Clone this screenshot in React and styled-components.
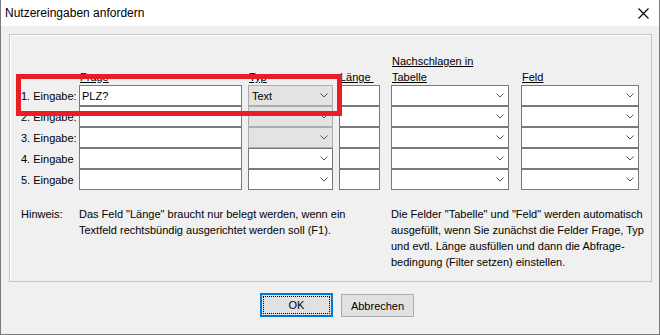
import React from "react";
import styled, { createGlobalStyle, css } from "styled-components";

const GlobalStyle = createGlobalStyle`
    html, body {
        margin: 0;
        padding: 0;
        background: #ffffff;
    }
    body {
        font-family: "Liberation Sans", Arial, sans-serif;
        color: #000;
    }
`
const columns = css`
    display: grid;
    grid-template-columns: 52px 163px 85px 46px 124px 118px;
    column-gap: 6px;
`
const Window = styled.div`
    position: relative;
    width: 660px;
    height: 335px;
    box-sizing: border-box;
    border: 1px solid #7a7a7a;
    border-top: none;
    background: #f0f0f0;
    display: flex;
    flex-direction: column;
`
const TitleBar = styled.div`
    height: 26px;
    background: #ffffff;
    display: flex;
    align-items: center;
    justify-content: space-between;
    padding: 0 10px 0 4px;
    font-size: 12px;
`
const Group = styled.div`
    margin: 8px 0 0 8px;
    width: 643px;
    height: 248px;
    box-sizing: border-box;
    border: 1px solid #c4c4c4;
    box-shadow: inset 1px 1px 0 #ffffff;
    padding: 18px 0 0 11px;
    display: flex;
    flex-direction: column;
    font-size: 11px;
`
const HeaderRow = styled.div`
    ${columns};
    height: 16px;
    line-height: 16px;
`
const Header = styled.div`
    grid-column: ${p => p.col};
    white-space: nowrap;
    > span {
        text-decoration: underline;
        padding-left: 1px;
    }
`
const DataRow = styled.div`
    ${columns};
    height: 21px;
`
const RowLabel = styled.div`
    display: flex;
    align-items: center;
    white-space: nowrap;
`
const TextBox = styled.div`
    width: ${p => p.w || "100%"};
    height: 21px;
    box-sizing: border-box;
    border: 1px solid #7a7a7a;
    background: #ffffff;
    display: flex;
    align-items: center;
    padding-left: 2px;
`
const Combo = styled.div`
    width: ${p => p.w || "100%"};
    height: 21px;
    box-sizing: border-box;
    border: 1px solid ${p => (p.locked ? "#adadad" : "#7a7a7a")};
    background: ${p => (p.locked ? "#e3e3e3" : "#ffffff")};
    display: flex;
    align-items: center;
    justify-content: space-between;
    padding: 0 4px 0 3px;
`
const HintRow = styled.div`
    ${columns};
    margin-top: 16px;
    line-height: 16px;
`
const HintText = styled.div`
    grid-column: ${p => p.span};
    white-space: nowrap;
`
const Footer = styled.div`
    display: flex;
    gap: 8px;
    padding: 11px 0 0 259px;
`
const Button = styled.button`
    width: 73px;
    height: ${p => (p.primary ? "24px" : "23px")};
    margin-top: ${p => (p.primary ? "0" : "1px")};
    box-sizing: border-box;
    font-family: "Liberation Sans", Arial, sans-serif;
    font-size: 11px;
    color: #000;
    background: #e1e1e1;
    border: ${p => (p.primary ? "2px solid #0078d7" : "1px solid #adadad")};
    outline: ${p => (p.primary ? "1px dotted #000" : "none")};
    outline-offset: -4px;
    padding: 0;
`
const Highlight = styled.div`
    position: absolute;
    left: 15px;
    top: 74px;
    width: 326px;
    height: 42px;
    box-sizing: border-box;
    border: 5px solid #ec1c24;
    pointer-events: none;
`

const Chevron = () => (
    <svg width="8" height="5" viewBox="0 0 8 5">
        <polyline points="0.5,0.5 4,4 7.5,0.5" fill="none" stroke="#555" strokeWidth="1" />
    </svg>
);

const CloseIcon = () => (
    <svg width="11" height="11" viewBox="0 0 11 11">
        <path d="M0.5 0.5 L10.5 10.5 M10.5 0.5 L0.5 10.5" stroke="#000" strokeWidth="1.1" />
    </svg>
);

const rows = [
    { label: "1. Eingabe:", frage: "PLZ?", typ: "Text", locked: true },
    { label: "2. Eingabe:", locked: true },
    { label: "3. Eingabe:", locked: true },
    { label: "4. Eingabe" },
    { label: "5. Eingabe" },
];

const App = () => {
    return (
        <>
            <GlobalStyle />
            <Window>
                <TitleBar>
                    <span>Nutzereingaben anfordern</span>
                    <CloseIcon />
                </TitleBar>
                <Group>
                    <HeaderRow>
                        <Header col={5}><span>Nachschlagen in</span></Header>
                    </HeaderRow>
                    <HeaderRow>
                        <Header col={2}><span>Frage</span></Header>
                        <Header col={3}><span>Typ</span></Header>
                        <Header col={4}><span>Länge&nbsp;</span></Header>
                        <Header col={5}><span>Tabelle</span></Header>
                        <Header col={6}><span>Feld</span></Header>
                    </HeaderRow>
                    {rows.map((row, index) => (
                        <DataRow key={index}>
                            <RowLabel>{row.label}</RowLabel>
                            <TextBox>{row.frage}</TextBox>
                            <Combo locked={row.locked}>
                                <span>{row.typ}</span>
                                <Chevron />
                            </Combo>
                            <TextBox w="41px" />
                            <Combo w="118px"><span /><Chevron /></Combo>
                            <Combo><span /><Chevron /></Combo>
                        </DataRow>
                    ))}
                    <HintRow>
                        <HintText span="1">Hinweis:</HintText>
                        <HintText span="2 / 5">
                            Das Feld "Länge" braucht nur belegt werden, wenn ein<br />
                            Textfeld rechtsbündig ausgerichtet werden soll (F1).
                        </HintText>
                        <HintText span="5 / 7">
                            Die Felder "Tabelle" und "Feld" werden automatisch<br />
                            ausgefüllt, wenn Sie zunächst die Felder Frage, Typ<br />
                            und evtl. Länge ausfüllen und dann die Abfrage-<br />
                            bedingung (Filter setzen) einstellen.
                        </HintText>
                    </HintRow>
                </Group>
                <Footer>
                    <Button primary>OK</Button>
                    <Button>Abbrechen</Button>
                </Footer>
                <Highlight />
            </Window>
        </>
    );
};

export default App;
